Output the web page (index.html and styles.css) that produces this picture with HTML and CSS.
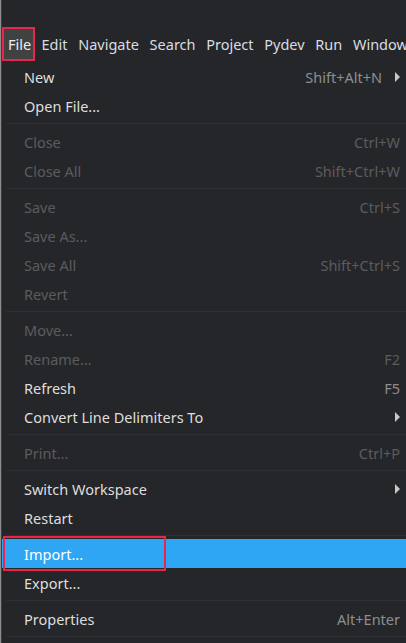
FILE: index.html
```html
<!DOCTYPE html>
<html>
<head>
<meta charset="utf-8">
<link rel="stylesheet" href="styles.css">
</head>
<body>
<div class="screen">
  <div class="menubar">
    <span class="mb-item mb-active">File</span>
    <span class="mb-item">Edit</span>
    <span class="mb-item">Navigate</span>
    <span class="mb-item">Search</span>
    <span class="mb-item">Project</span>
    <span class="mb-item">Pydev</span>
    <span class="mb-item">Run</span>
    <span class="mb-item">Window</span>
  </div>
  <div class="menu">
    <div class="row"><span class="label">New</span><span class="key">Shift+Alt+N</span><span class="arrow"></span></div>
    <div class="row"><span class="label">Open File...</span></div>
    <div class="sep"></div>
    <div class="row off"><span class="label">Close</span><span class="key">Ctrl+W</span></div>
    <div class="row off"><span class="label">Close All</span><span class="key">Shift+Ctrl+W</span></div>
    <div class="sep"></div>
    <div class="row off"><span class="label">Save</span><span class="key">Ctrl+S</span></div>
    <div class="row off"><span class="label">Save As...</span></div>
    <div class="row off"><span class="label">Save All</span><span class="key">Shift+Ctrl+S</span></div>
    <div class="row off"><span class="label">Revert</span></div>
    <div class="sep"></div>
    <div class="row off"><span class="label">Move...</span></div>
    <div class="row off"><span class="label">Rename...</span><span class="key">F2</span></div>
    <div class="row"><span class="label">Refresh</span><span class="key">F5</span></div>
    <div class="row"><span class="label">Convert Line Delimiters To</span><span class="arrow"></span></div>
    <div class="sep"></div>
    <div class="row off"><span class="label">Print...</span><span class="key">Ctrl+P</span></div>
    <div class="sep"></div>
    <div class="row"><span class="label">Switch Workspace</span><span class="arrow"></span></div>
    <div class="row"><span class="label">Restart</span></div>
    <div class="sep"></div>
    <div class="row hl"><span class="label">Import...</span></div>
    <div class="row"><span class="label">Export...</span></div>
    <div class="sep"></div>
    <div class="row"><span class="label">Properties</span><span class="key">Alt+Enter</span></div>
    <div class="sep"></div>
  </div>
  <div class="callout"></div>
</div>
</body>
</html>
```

FILE: styles.css
```css
html, body {
  margin: 0;
  padding: 0;
  background: #252629;
  overflow: hidden;
}
.screen {
  position: relative;
  width: 406px;
  height: 643px;
  box-sizing: border-box;
  border-left: 1px solid #8d8d8d;
  box-shadow: inset 1px 0 0 #3c3d40;
  font-family: "Noto Sans", sans-serif;
  font-size: 14.5px;
  color: #dedede;
  overflow: hidden;
}
.menubar {
  display: flex;
  align-items: center;
  padding-top: 27px;
  height: 34px;
  white-space: nowrap;
}
.mb-item {
  padding: 0 5.35px;
  line-height: 30px;
  color: #d8dde2;
}
.mb-active {
  margin-left: 1px;
  margin-right: 1px;
  padding: 0 2px 0 4px;
  border: 2px solid #e8264b;
  background: #404241;
  line-height: 30px;
  color: #eeeeee;
}
.menu {
  padding-top: 1px;
  padding-left: 1px;
}
.row {
  display: flex;
  align-items: center;
  height: 29px;
  padding: 0 6px 0 22px;
  white-space: nowrap;
}
.label {
  flex: 1;
}
.key {
  color: #8c8e90;
}
.row.off .label, .row.off .key {
  color: #5b5c5f;
}
.arrow {
  width: 0;
  height: 0;
  margin-left: 13px;
  border-top: 5px solid transparent;
  border-bottom: 5px solid transparent;
  border-left: 5px solid #c8c8c8;
}
.row .label + .arrow {
  margin-left: 0;
}
.hl {
  background: #2ea6f4;
}
.hl .label {
  color: #ffffff;
}
.sep {
  height: 7px;
  margin-left: 4px;
  background: linear-gradient(#252629 0 3px, #2f3033 3px 4px, #252629 4px);
}
.callout {
  position: absolute;
  left: 2px;
  top: 536px;
  width: 163px;
  height: 35px;
  box-sizing: border-box;
  border: 2px solid #e8264b;
}
```
